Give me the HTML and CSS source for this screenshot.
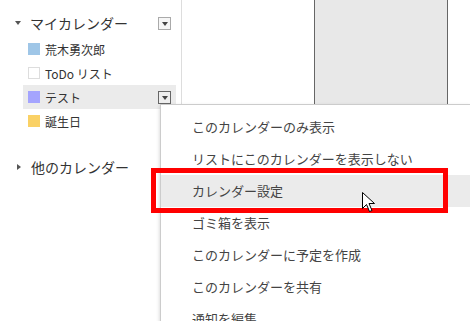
FILE: index.html
```html
<!DOCTYPE html>
<html lang="ja">
<head>
    <meta charset="UTF-8">
    <title>カレンダー設定</title>
    <link rel="stylesheet" href="styles.css">
</head>
<body>

    <div class="layout">
        <!-- Left list of calendars -->
        <div class="sidebar">
            <div class="group-head">
                <span class="arrow-down"></span>
                <span class="group-title">マイカレンダー</span>
                <span class="drop-btn"></span>
            </div>
            <ul class="cal-list">
                <li class="cal-item"><span class="swatch blue"></span>荒木勇次郎</li>
                <li class="cal-item"><span class="swatch empty"></span>ToDo リスト</li>
                <li class="cal-item hover"><span class="swatch purple"></span>テスト<span class="drop-btn dark"></span></li>
                <li class="cal-item"><span class="swatch yellow"></span>誕生日</li>
            </ul>
            <div class="group-head other">
                <span class="arrow-right"></span>
                <span class="group-title">他のカレンダー</span>
            </div>
        </div>

        <!-- Grid area -->
        <div class="main">
            <div class="top-strip">
                <div class="day-col"></div>
            </div>
        </div>
    </div>

    <!-- Context menu for テスト -->
    <ul class="menu">
        <li>このカレンダーのみ表示</li>
        <li>リストにこのカレンダーを表示しない</li>
        <li class="active">カレンダー設定</li>
        <li>ゴミ箱を表示</li>
        <li>このカレンダーに予定を作成</li>
        <li>このカレンダーを共有</li>
        <li>通知を編集</li>
    </ul>

    <div class="highlight-box"></div>

    <svg class="cursor" width="14" height="22" viewBox="0 0 14 22">
        <path d="M0.5 0.5 L0.5 16.5 L4.5 12.5 L7.5 19.5 L10 18.5 L7 11.5 L12.5 11.5 Z" fill="#fff" stroke="#000" stroke-width="1"/>
    </svg>

</body>
</html>
```

FILE: styles.css
```css
body {
    margin: 0;
    width: 470px;
    height: 321px;
    overflow: hidden;
    position: relative;
    background-color: #fff;
    font-family: "Noto Sans CJK JP", "Noto Sans", sans-serif;
    color: #222;
}

.layout {
    display: flex;
    height: 321px;
}

.sidebar {
    width: 182px;
    border-right: 1px solid #ddd;
    padding-top: 12px;
    box-sizing: border-box;
}

.group-head {
    display: flex;
    align-items: center;
    height: 22px;
    padding-left: 15px;
    padding-right: 10px;
}

.group-head.other {
    margin-top: 23px;
}

.group-title {
    font-size: 14px;
    margin-left: 9px;
    flex: 1;
    line-height: 22px;
    color: #333;
}

.arrow-down {
    width: 0;
    height: 0;
    border-left: 3.5px solid transparent;
    border-right: 3.5px solid transparent;
    border-top: 4px solid #555;
}

.arrow-right {
    width: 0;
    height: 0;
    border-top: 3.5px solid transparent;
    border-bottom: 3.5px solid transparent;
    border-left: 4px solid #555;
    margin-left: 2px;
    margin-right: 1px;
}

.drop-btn {
    width: 11px;
    height: 11px;
    border: 1px solid #aaa;
    background-color: #f6f6f6;
    position: relative;
    margin-left: auto;
}

.drop-btn::after {
    content: "";
    position: absolute;
    left: 3px;
    top: 4px;
    border-left: 3px solid transparent;
    border-right: 3px solid transparent;
    border-top: 4px solid #444;
}

.drop-btn.dark {
    border-color: #666;
    background-color: #eee;
}

.cal-list {
    list-style: none;
    margin: 3px 0 0;
    padding: 0;
}

.cal-item {
    display: flex;
    align-items: center;
    height: 24px;
    margin-left: 23px;
    margin-right: 5px;
    padding-left: 5px;
    padding-right: 5px;
    font-size: 12px;
    color: #333;
}

.cal-item.hover {
    background-color: #ebebeb;
}

.swatch {
    width: 12px;
    height: 12px;
    margin-right: 5px;
    box-sizing: border-box;
}

.swatch.blue { background-color: #9fc6e7; }
.swatch.purple { background-color: #a4a4fe; }
.swatch.yellow { background-color: #fad165; }
.swatch.empty { border: 1px solid #ddd; }

.main {
    flex: 1;
}

.top-strip {
    height: 104px;
    border-bottom: 2px solid #ccc;
    padding-left: 132px;
}

.day-col {
    width: 132px;
    height: 104px;
    background-color: #e8e8e8;
    border-left: 1px solid #666;
    border-right: 1px solid #666;
}

.menu {
    position: absolute;
    left: 160px;
    top: 104px;
    width: 309px;
    margin: 0;
    padding: 6px 0 0;
    list-style: none;
    background-color: #fff;
    border: 1px solid #ccc;
    border-right: none;
    box-shadow: 0 2px 4px rgba(0, 0, 0, 0.2);
}

.menu li {
    height: 32px;
    line-height: 32px;
    padding-left: 31px;
    font-size: 13px;
    color: #444;
}

.menu li.active {
    background-color: #ebebeb;
}

.highlight-box {
    position: absolute;
    left: 151px;
    top: 168px;
    width: 297px;
    height: 45px;
    border: 5px solid #f00;
    box-sizing: border-box;
}

.cursor {
    position: absolute;
    left: 362px;
    top: 192px;
}
```
